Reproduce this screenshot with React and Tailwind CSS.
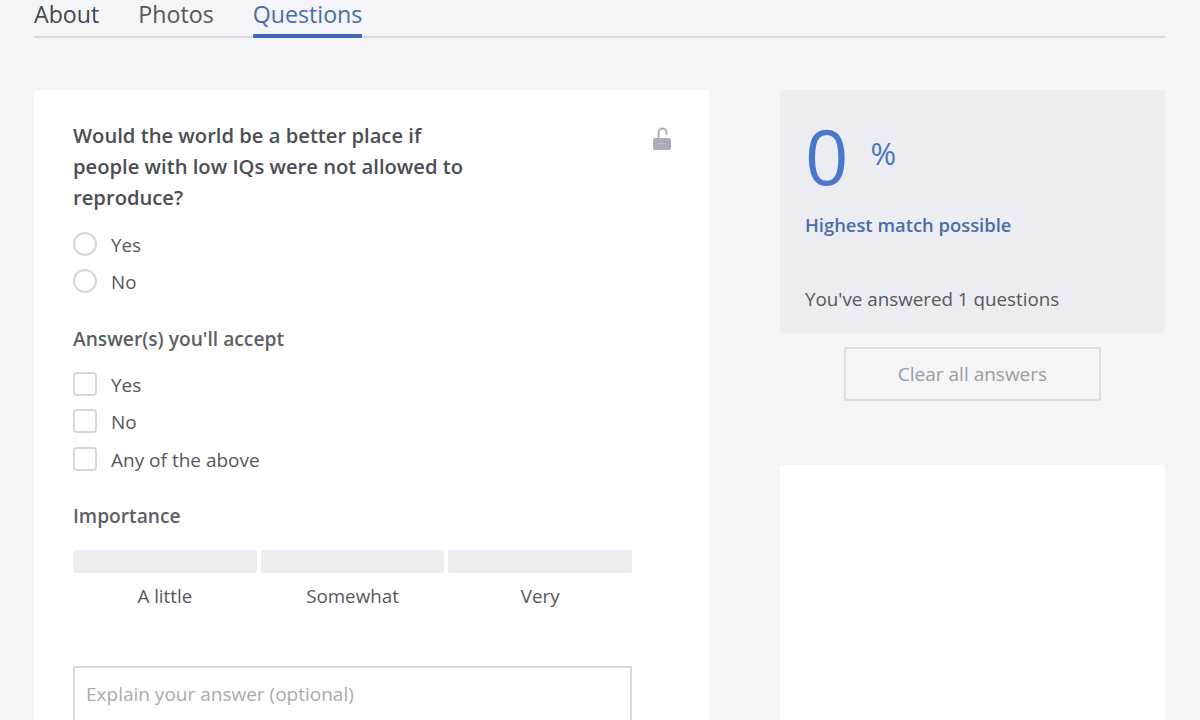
function Radio({ label }) {
  return (
    <div className="flex items-center h-[37.5px]">
      <span className="w-6 h-6 rounded-full border-2 border-[#d6d7da] bg-white shrink-0" />
      <span className="ml-[14px] mt-[2px] text-[18.8px] text-[#55585e]">{label}</span>
    </div>
  );
}

function Check({ label }) {
  return (
    <div className="flex items-center h-[37.5px]">
      <span className="w-6 h-6 rounded-[4px] border-2 border-[#d6d7da] bg-white shrink-0" />
      <span className="ml-[14px] mt-[2px] text-[19px] text-[#55585e]">{label}</span>
    </div>
  );
}

function Level({ label }) {
  return (
    <div className="flex-1 flex flex-col">
      <div className="h-[23px] rounded-[2px] bg-[#ecedf1]" />
      <div className="mt-[11px] text-center text-[18.8px] leading-[24px] text-[#55585e]">{label}</div>
    </div>
  );
}

export default function App() {
  return (
    <div
      className="h-[720px] w-[1200px] overflow-hidden bg-[#f4f5f9] pl-[34px] pr-[35px]"
      style={{ fontFamily: '"Open Sans", sans-serif' }}
    >
      <nav className="flex h-[38px] gap-[39px] border-b-2 border-[#d8dae0] text-[23.2px] leading-[29px]">
        <span className="text-[#44474d]">About</span>
        <span className="text-[#55585e]">Photos</span>
        <span className="relative text-[#4a6da7]">
          Questions
          <span className="absolute left-0 right-0 top-[34px] h-[4px] rounded-[1px] bg-[#4167b2]" />
        </span>
      </nav>

      <div className="mt-[52px] flex gap-[71px]">
        <main className="relative h-[640px] w-[675px] shrink-0 rounded-[2px] bg-white pl-[39px] pr-[77px] pt-[30px]">
          <svg className="absolute left-[618px] top-[36px]" width="20" height="26" viewBox="0 0 20 26" fill="none">
            <path d="M6.5 12V6.5a4 4 0 0 1 8 0V8" stroke="#a9acb8" strokeWidth="1.8" strokeLinecap="round" />
            <rect x="1" y="12" width="18" height="12" rx="2.5" fill="#a9acb8" />
            <rect x="6" y="17" width="8" height="1.2" fill="#bcbec9" />
          </svg>

          <h2 className="w-[410px] text-[20.2px] font-semibold leading-[31px] text-[#4b4e54]">
            Would the world be a better place if people with low IQs were not allowed to reproduce?
          </h2>

          <div className="mt-[12px]">
            <Radio label="Yes" />
            <Radio label="No" />
          </div>

          <h3 className="mt-[26px] text-[19.2px] font-semibold leading-[26px] text-[#5c5f65]">Answer(s) you'll accept</h3>

          <div className="mt-[13px]">
            <Check label="Yes" />
            <Check label="No" />
            <Check label="Any of the above" />
          </div>

          <h3 className="mt-[25px] text-[19.2px] font-semibold leading-[26px] text-[#5c5f65]">Importance</h3>

          <div className="mt-[21px] flex gap-[4px]">
            <Level label="A little" />
            <Level label="Somewhat" />
            <Level label="Very" />
          </div>

          <div className="mt-[58px] h-[100px] rounded-[2px] border-2 border-[#d6d7da] px-[11px] pt-[13px] text-[19px] leading-[26px] text-[#a9abb0]">
            Explain your answer (optional)
          </div>
        </main>

        <aside className="flex w-[385px] shrink-0 flex-col">
          <section className="rounded-[2px] bg-[#ecedf2]">
            <div className="h-[175px] px-[25px] pt-[20px]">
              <div className="flex items-start">
                <span className="text-[76px] font-normal leading-[92px] text-[#4a76cd]">0</span>
                <span className="ml-[22px] mt-[25px] text-[31px] leading-[36px] text-[#4a76c4]">%</span>
              </div>
              <div className="mt-[10px] text-[18.4px] font-semibold leading-[26px] text-[#4a6da7]">Highest match possible</div>
            </div>
            <div className="flex h-[68px] items-center border-t border-[#f3f4f8] px-[25px] text-[18.8px] text-[#55585e]">
              You've answered 1 questions
            </div>
          </section>

          <button className="mx-auto mt-[14px] h-[54px] w-[257px] rounded-[2px] border-2 border-[#dcdde2] text-[19px] text-[#9a9ca1]">
            Clear all answers
          </button>

          <div className="mt-[64px] h-[400px] rounded-[2px] bg-white" />
        </aside>
      </div>
    </div>
  );
}
